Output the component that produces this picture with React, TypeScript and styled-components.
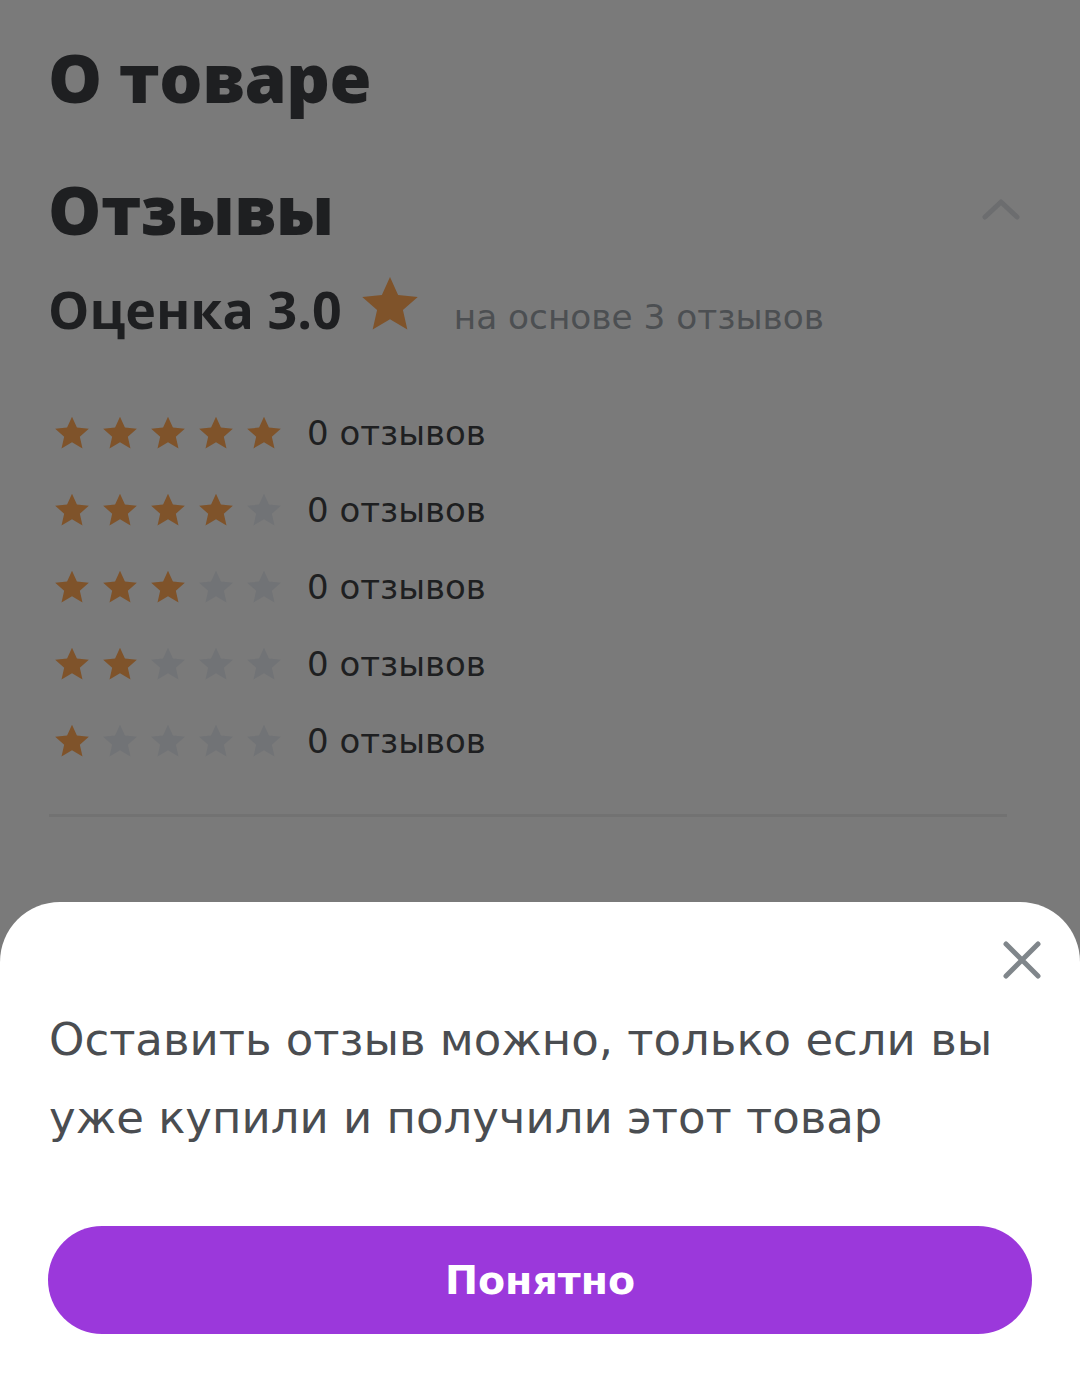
import React from "react";
import styled, { createGlobalStyle } from "styled-components";

const Global = createGlobalStyle`
  html, body { margin: 0; padding: 0; }
  body { background: #7a7a7a; width: 1080px; height: 1380px; overflow: hidden; }
`;

const Page = styled.main`
  padding: 37px 48px 0 48px;
  display: flex;
  flex-direction: column;
`;

const Title = styled.h1<{ $size: number }>`
  margin: 0;
  font-family: "Open Sans", sans-serif;
  font-weight: 800;
  font-size: ${(p) => p.$size}px;
  line-height: 80px;
  color: #1e1f21;
  letter-spacing: -0.5px;
`;

const SectionHeader = styled.div`
  margin-top: 52px;
  display: flex;
  align-items: center;
  justify-content: space-between;
  padding-right: 11px;
`;

const Summary = styled.div`
  margin-top: 22px;
  display: flex;
  align-items: center;
  height: 72px;
`;

const Score = styled.span`
  font-family: "Open Sans", sans-serif;
  font-weight: 700;
  font-size: 52px;
  color: #1e1f21;
  margin-top: 2px;
`;

const BigStar = styled.span`
  display: inline-flex;
  margin-left: 15px;
  margin-top: -6px;
`;

const Basis = styled.span`
  margin-left: 31px;
  margin-top: 20px;
  font-family: "DejaVu Sans", sans-serif;
  font-size: 34.3px;
  color: #4c4f52;
`;

const Rows = styled.div`
  margin-top: 70px;
  display: flex;
  flex-direction: column;
  gap: 37px;
`;

const Row = styled.div`
  display: flex;
  align-items: center;
  height: 40px;
`;

const Stars = styled.div`
  display: flex;
  gap: 8px;
  padding-left: 4px;
  width: 255px;
`;

const Count = styled.span`
  font-family: "DejaVu Sans", sans-serif;
  font-size: 34px;
  color: #1e1f21;
`;

const Divider = styled.hr`
  margin: 53px 25px 0 1px;
  border: none;
  height: 3px;
  background: #727272;
`;

const Sheet = styled.section`
  position: fixed;
  left: 0;
  right: 0;
  bottom: 0;
  height: 478px;
  background: #ffffff;
  border-radius: 60px 60px 0 0;
  box-sizing: border-box;
  padding: 38px 48px 0 49px;
  display: flex;
  flex-direction: column;
`;

const CloseButton = styled.button`
  align-self: flex-end;
  margin-right: -10px;
  width: 40px;
  height: 40px;
  padding: 0;
  border: none;
  background: none;
  display: flex;
  align-items: center;
  justify-content: center;
`;

const Message = styled.p`
  margin: 21px 0 0;
  font-family: "DejaVu Sans", sans-serif;
  font-size: 45px;
  line-height: 78px;
  color: #4a4d51;
`;

const PrimaryButton = styled.button`
  margin-top: 69px;
  margin-left: -1px;
  height: 108px;
  border: none;
  border-radius: 54px;
  background: #9b38db;
  color: #ffffff;
  font-family: "DejaVu Sans", sans-serif;
  font-weight: 700;
  font-size: 39.5px;
  display: flex;
  align-items: center;
  justify-content: center;
`;

const STAR = "M12 2.2l2.95 6.55 7.15.7-5.4 4.75 1.6 7.05L12 17.55 5.7 21.25l1.6-7.05L1.9 9.45l7.15-.7z";

const Star: React.FC<{ size: number; on: boolean }> = ({ size, on }) => (
  <svg width={size} height={size} viewBox="0 0 24 24">
    <path d={STAR} fill={on ? "#7f532a" : "#717376"} />
  </svg>
);

export default function App() {
  return (
    <>
      <Global />
      <Page>
        <Title $size={68}>О товаре</Title>
        <SectionHeader>
          <Title $size={67}>Отзывы</Title>
          <svg width="40" height="26" viewBox="0 0 40 26">
            <path d="M4 21L20 6l16 15" fill="none" stroke="#6c6d6f" strokeWidth="5" strokeLinecap="round" strokeLinejoin="round" />
          </svg>
        </SectionHeader>
        <Summary>
          <Score>Оценка 3.0</Score>
          <BigStar>
            <Star size={66} on />
          </BigStar>
          <Basis>на основе 3 отзывов</Basis>
        </Summary>
        <Rows>
          {[5, 4, 3, 2, 1].map((n) => (
            <Row key={n}>
              <Stars>
                {[1, 2, 3, 4, 5].map((i) => (
                  <Star key={i} size={40} on={i <= n} />
                ))}
              </Stars>
              <Count>0 отзывов</Count>
            </Row>
          ))}
        </Rows>
        <Divider />
      </Page>
      <Sheet>
        <CloseButton aria-label="Закрыть">
          <svg width="40" height="40" viewBox="0 0 40 40">
            <path d="M4 4l32 32M36 4L4 36" stroke="#80868b" strokeWidth="5" strokeLinecap="round" />
          </svg>
        </CloseButton>
        <Message>Оставить отзыв можно, только если вы уже купили и получили этот товар</Message>
        <PrimaryButton>Понятно</PrimaryButton>
      </Sheet>
    </>
  );
}
